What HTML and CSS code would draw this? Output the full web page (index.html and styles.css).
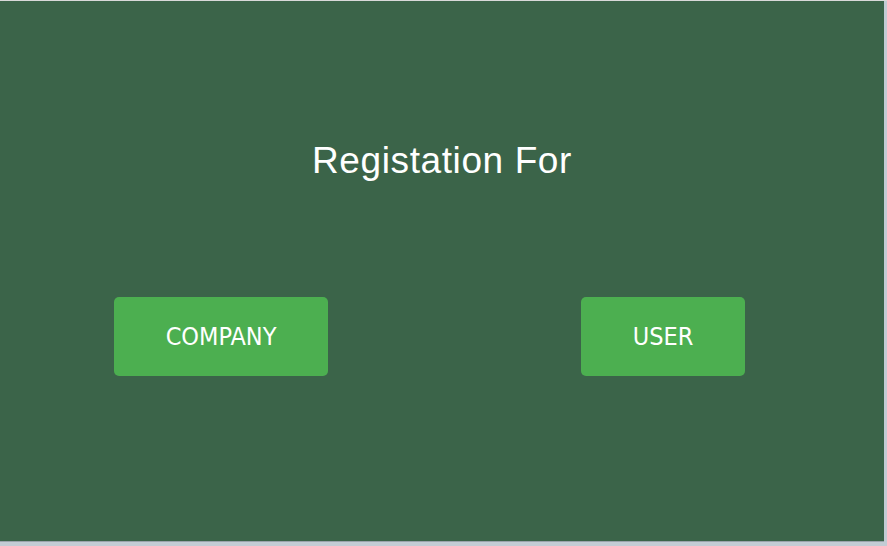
FILE: index.html
```html
<!DOCTYPE html>
<html>
<head>
<meta charset="utf-8">
<link rel="stylesheet" href="styles.css">
</head>
<body>
<div class="panel">
  <h1 class="title">Registation For</h1>
  <div class="choices">
    <div class="cell"><button class="btn">COMPANY</button></div>
    <div class="cell"><button class="btn">USER</button></div>
  </div>
</div>
</body>
</html>
```
FILE: styles.css
```css
html, body {
  margin: 0;
  padding: 0;
  background: #c3ccd4;
  height: 100%;
}
body {
  border-top: 1px solid #d9d9d9;
  box-sizing: border-box;
}
.panel {
  width: 884px;
  height: 540px;
  background: #3b6449;
  display: flex;
  flex-direction: column;
  align-items: stretch;
  border-bottom: 1px solid #9aa3ab;
}
.title {
  margin: 139px 0 0;
  text-align: center;
  font-family: "Liberation Sans", Arial, sans-serif;
  font-weight: normal;
  font-size: 37px;
  line-height: 42px;
  letter-spacing: 0.6px;
  color: #ffffff;
}
.choices {
  display: grid;
  grid-template-columns: 1fr 1fr;
  margin-top: 115px;
}
.cell {
  display: flex;
  justify-content: center;
}
.btn {
  background: #4caf50;
  color: #ffffff;
  border: none;
  border-radius: 5px;
  height: 79px;
  padding: 0 52px;
  font-family: "DejaVu Sans Condensed", "DejaVu Sans", sans-serif;
  font-size: 25px;
}
```
